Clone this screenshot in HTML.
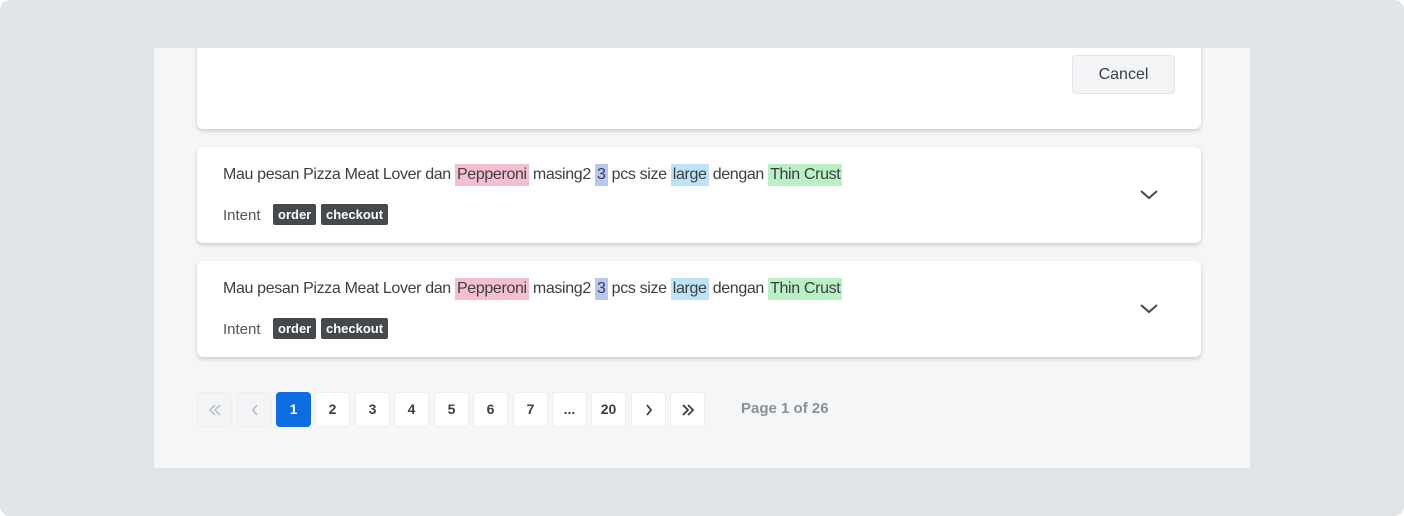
<!DOCTYPE html>
<html><head><style>
*{box-sizing:border-box;margin:0;padding:0}
body{width:1404px;height:516px;background:#fff;font-family:"Liberation Sans",sans-serif;overflow:hidden;position:relative}
.outer{position:absolute;left:0;top:0;width:1404px;height:516px;background:#e2e5e8;border-radius:10px}
.panel{position:absolute;left:154px;top:48px;width:1096px;height:420px;background:#f5f6f8;overflow:hidden}
.card{position:absolute;left:43px;width:1004px;background:#fff;border-radius:6px;box-shadow:0 2px 4px rgba(0,0,0,.18)}
.cancel{position:absolute;left:875px;width:103px;height:39px;background:#f3f4f6;border:1px solid #e3e5e8;border-radius:4px;font-size:16px;color:#3c4046;text-align:center;line-height:37px;font-weight:500}
.line{position:absolute;left:26px;top:17px;font-size:16px;letter-spacing:-0.35px;color:#3b3f45;line-height:22px;white-space:nowrap}
.line span{padding:0 2px;display:inline-block;line-height:22px}
.pk{background:#f6bfd0}.bl{background:#b8c6f2}.cy{background:#bfe3f6}.gr{background:#baf0c3}
.intent{position:absolute;left:26px;top:58px;font-size:15px;color:#555;line-height:22px}
.tag{position:absolute;top:57px;height:21px;background:#45484d;color:#fff;font-size:13px;font-weight:bold;line-height:21px;padding:0 5px;border-radius:2px}
.chev{position:absolute;left:942px;top:40px}
.pb{position:absolute;top:344px;width:35px;height:35px;background:#fff;border:1px solid #eceef0;border-radius:4px;font-size:14px;font-weight:bold;color:#3b3f45;text-align:center;line-height:33px}
.pb svg{position:absolute;left:9px;top:9px}
.pb.dis{background:#f3f4f6;color:#b7bcc2}
.pb.act{background:#0b6de0;color:#fff;border-color:#0b6de0}
.pg{position:absolute;left:587px;top:352px;font-size:15px;color:#8b9097;font-weight:bold}
</style></head><body>
<div class="outer"></div>
<div class="panel">
 <div class="card" style="top:-20px;height:101px"><div class="cancel" style="top:27px">Cancel</div></div>
 <div class="card" style="top:99px;height:96px">
  <div class="line">Mau pesan Pizza Meat Lover dan <span class="pk">Pepperoni</span> masing2 <span class="bl">3</span> pcs size <span class="cy">large</span> dengan <span class="gr">Thin Crust </span></div>
  <div class="intent">Intent</div>
  <div class="tag" style="left:76px">order</div><div class="tag" style="left:124px">checkout</div>
  <svg class="chev" width="20" height="14" viewBox="0 0 20 14"><path d="M2 4l8 7 8-7" fill="none" stroke="#45484d" stroke-width="2"/></svg>
 </div>
 <div class="card" style="top:213px;height:96px">
  <div class="line">Mau pesan Pizza Meat Lover dan <span class="pk">Pepperoni</span> masing2 <span class="bl">3</span> pcs size <span class="cy">large</span> dengan <span class="gr">Thin Crust </span></div>
  <div class="intent">Intent</div>
  <div class="tag" style="left:76px">order</div><div class="tag" style="left:124px">checkout</div>
  <svg class="chev" width="20" height="14" viewBox="0 0 20 14"><path d="M2 4l8 7 8-7" fill="none" stroke="#45484d" stroke-width="2"/></svg>
 </div>
 <div class="pb dis" style="left:43px"><svg width="16" height="16" viewBox="0 0 16 16"><path d="M8 3L3 8l5 5M13 3L8 8l5 5" fill="none" stroke="#b7bcc2" stroke-width="1.5"/></svg></div>
 <div class="pb dis" style="left:83px"><svg width="16" height="16" viewBox="0 0 16 16"><path d="M10 3L6 8l4 5" fill="none" stroke="#b7bcc2" stroke-width="1.5"/></svg></div>
 <div class="pb act" style="left:122px">1</div>
 <div class="pb" style="left:161px">2</div>
 <div class="pb" style="left:201px">3</div>
 <div class="pb" style="left:240px">4</div>
 <div class="pb" style="left:280px">5</div>
 <div class="pb" style="left:319px">6</div>
 <div class="pb" style="left:359px">7</div>
 <div class="pb" style="left:398px">...</div>
 <div class="pb" style="left:437px">20</div>
 <div class="pb" style="left:477px"><svg width="16" height="16" viewBox="0 0 16 16"><path d="M6 3l4 5-4 5" fill="none" stroke="#3b3f45" stroke-width="1.8"/></svg></div>
 <div class="pb" style="left:516px"><svg width="16" height="16" viewBox="0 0 16 16"><path d="M3 3l5 5-5 5M8 3l5 5-5 5" fill="none" stroke="#3b3f45" stroke-width="1.8"/></svg></div>
 <div class="pg">Page 1 of 26</div>
</div>
</body></html>
